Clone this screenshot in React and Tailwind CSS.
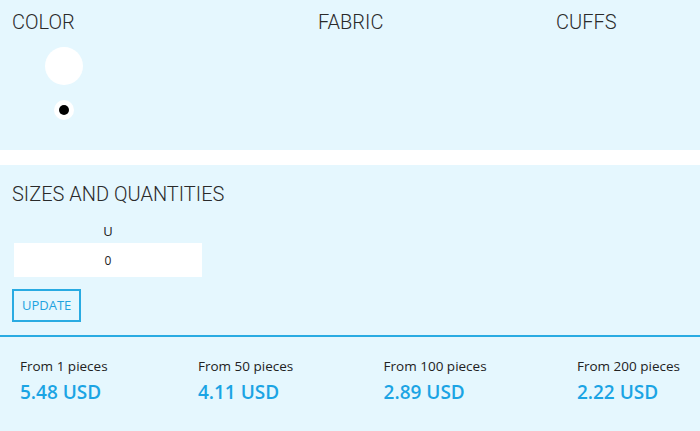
import React from 'react';

const tiers = [
  { from: 1, price: '5.48' },
  { from: 50, price: '4.11' },
  { from: 100, price: '2.89' },
  { from: 200, price: '2.22' },
];

const App = () => {
  return (
    <div className="w-[700px] h-[431px] bg-white font-['Roboto',sans-serif] text-[#333]">
      {/* Options */}
      <div className="h-[150px] bg-[#e5f7fe] flex pt-[10px]">
        <div className="w-[306px] pl-3">
          <h2 className="text-[20px] leading-6 font-light text-[#2a2a2a]">COLOR</h2>
          <div className="w-[104px] flex flex-col items-center mt-[13px]">
            <div className="w-[38px] h-[38px] rounded-full bg-white" />
            <div className="mt-[15px] w-[20px] h-[20px] rounded-full bg-white flex items-center justify-center">
              <div className="w-[10px] h-[10px] rounded-full bg-black" />
            </div>
          </div>
        </div>
        <div className="w-[238px] pl-3">
          <h2 className="text-[20px] leading-6 font-light text-[#2a2a2a]">FABRIC</h2>
        </div>
        <div className="flex-1 pl-3">
          <h2 className="text-[20px] leading-6 font-light text-[#2a2a2a]">CUFFS</h2>
        </div>
      </div>

      {/* Sizes */}
      <div className="mt-[15px] bg-[#e5f7fe] h-[266px] flex flex-col">
        <div className="px-3 pt-[17px] pb-[13px]">
          <h2 className="text-[20px] leading-6 font-light text-[#2a2a2a]">SIZES AND QUANTITIES</h2>
          <div className="w-[188px] ml-[2px] mt-[17px] flex flex-col items-center">
            <span className="text-[13px] leading-4 font-['Open_Sans',sans-serif] text-[#222]">U</span>
            <input
              type="text"
              defaultValue="0"
              className="mt-[4px] w-full h-[34px] bg-white text-center text-[12px] font-['Open_Sans',sans-serif] text-[#222] outline-none"
            />
          </div>
          <button className="mt-[12px] h-[33px] px-[8px] border-2 border-[#29abe2] text-[13px] text-[#1ea3e0] font-['Open_Sans',sans-serif]">
            UPDATE
          </button>
        </div>
        <div className="border-t-2 border-[#29abe2] flex justify-between px-5 pt-[20px] font-['Open_Sans',sans-serif]">
          {tiers.map((tier) => (
            <div key={tier.from}>
              <div className="text-[13.5px] leading-[18px] text-[#222]">From {tier.from} pieces</div>
              <div className="mt-[5px] text-[19px] leading-6 font-semibold text-[#1ba4e4]">
                {tier.price} USD
              </div>
            </div>
          ))}
        </div>
      </div>
    </div>
  );
};

export default App;
